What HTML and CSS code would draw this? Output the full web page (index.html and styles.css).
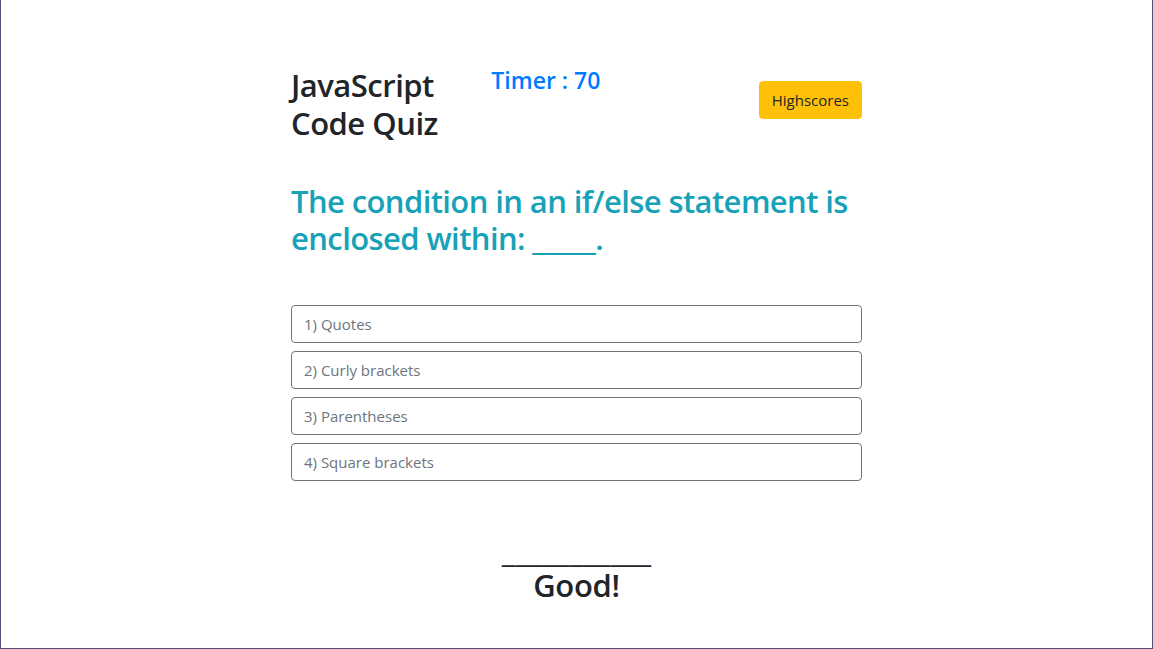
FILE: index.html
```html
<!DOCTYPE html>
<html lang="en">
<head>
<meta charset="utf-8">
<title>JavaScript Code Quiz</title>
<link rel="stylesheet" href="styles.css">
</head>
<body>
<div class="frame">
  <main class="quiz">
    <header class="top">
      <h2 class="title">JavaScript Code Quiz</h2>
      <h4 class="timer">Timer : 70</h4>
      <div class="actions"><button class="btn-warning" type="button">Highscores</button></div>
    </header>
    <h2 class="question">The condition in an if/else statement is enclosed within: _____.</h2>
    <div class="answers">
      <button class="answer" type="button">1) Quotes</button>
      <button class="answer" type="button">2) Curly brackets</button>
      <button class="answer" type="button">3) Parentheses</button>
      <button class="answer" type="button">4) Square brackets</button>
    </div>
    <h2 class="feedback"><span class="rule">___________</span><span class="word">Good!</span></h2>
  </main>
</div>
</body>
</html>
```

FILE: styles.css
```css
* { box-sizing: border-box; }
html, body { margin: 0; padding: 0; background: #fff; }
body {
  font-family: "Open Sans", "Noto Sans", "Liberation Sans", sans-serif;
  color: #212529;
  font-size: 16px;
}
.frame {
  height: 649px;
  border-left: 1px solid #5b4a7e;
  border-right: 1px solid #4b5272;
  border-bottom: 1px solid #5a4d78;
  overflow: hidden;
}
.quiz {
  width: 571px;
  margin: 0 auto;
  padding-top: 66px;
}
.top {
  display: grid;
  grid-template-columns: 1fr 1fr 1fr;
  column-gap: 24px;
  align-items: start;
}
h2, h4 { margin: 0; font-weight: 500; }
.title {
  font-size: 31px;
  line-height: 38.4px;
  font-weight: 600;
  letter-spacing: -0.5px;
}
.timer {
  font-size: 23px;
  line-height: 28.8px;
  color: #007bff;
  font-weight: 600;
  padding-left: 2px;
}
.actions { display: flex; justify-content: flex-end; padding-top: 15px; }
.btn-warning {
  font-family: inherit;
  font-size: 15px;
  line-height: 24px;
  height: 38px;
  padding: 6px 12px;
  border: 1px solid #ffc107;
  background: #ffc107;
  color: #212529;
  border-radius: 4px;
}
.question {
  margin: 40px 0 47px;
  font-size: 31px;
  line-height: 37.5px;
  color: #17a2b8;
  font-weight: 600;
  letter-spacing: -0.6px;
}
.answers { display: flex; flex-direction: column; gap: 8px; }
.answer {
  display: block;
  width: 100%;
  height: 38px;
  text-align: left;
  font-family: inherit;
  font-size: 15px;
  line-height: 24px;
  padding: 6px 12px;
  background: #fff;
  border: 1px solid #6c757d;
  border-radius: 4px;
  color: #6c757d;
}
.feedback {
  margin: 53px 0 0;
  text-align: center;
  font-size: 31px;
  font-weight: 600;
  letter-spacing: -0.3px;
  display: flex;
  flex-direction: column;
  align-items: center;
}
.rule { display: block; line-height: 33px; letter-spacing: 0; font-weight: 500; }
.word { display: block; line-height: 36px; }
```
